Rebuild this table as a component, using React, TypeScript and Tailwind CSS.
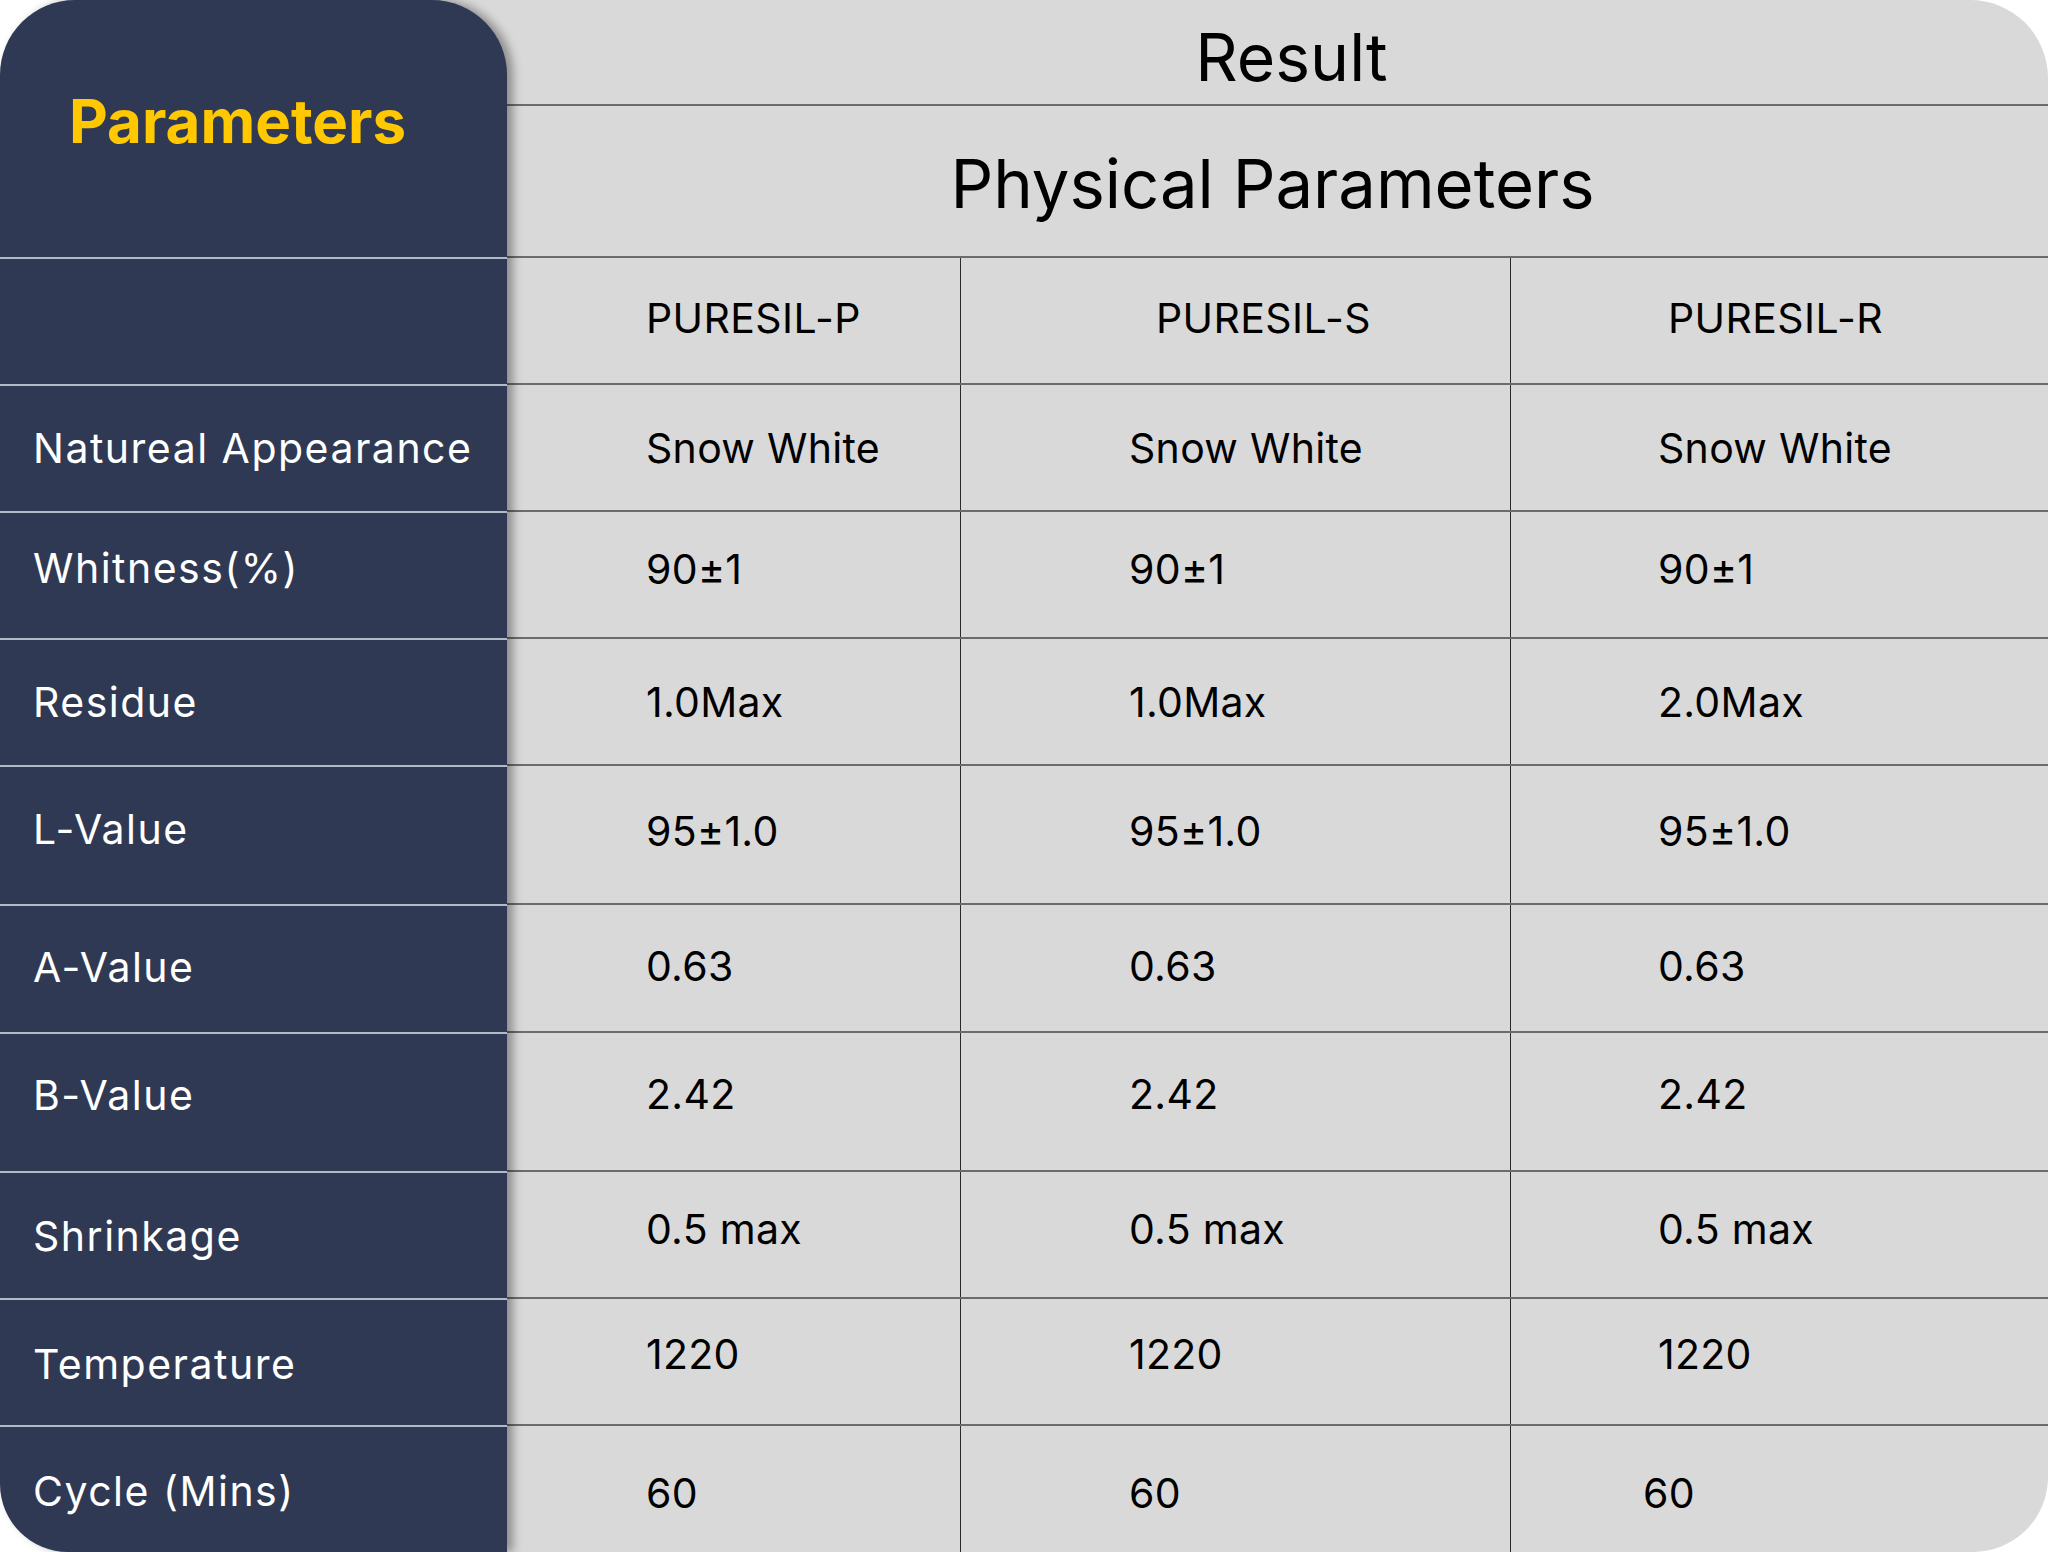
import React from "react";

type Row = { label: string; v: string[]; h: string; lo: string; vo: string; c3?: string };

const rows: Row[] = [
  { label: "Natureal Appearance", v: ["Snow White", "Snow White", "Snow White"], h: "h-[127px]", lo: "", vo: "pt-[2px]" },
  { label: "Whitness(%)", v: ["90±1", "90±1", "90±1"], h: "h-[127px]", lo: "pb-[14px]", vo: "pb-[10px]" },
  { label: "Residue", v: ["1.0Max", "1.0Max", "2.0Max"], h: "h-[127px]", lo: "", vo: "pt-[2px]" },
  { label: "L-Value", v: ["95±1.0", "95±1.0", "95±1.0"], h: "h-[139px]", lo: "pb-[12px]", vo: "pb-[6px]" },
  { label: "A-Value", v: ["0.63", "0.63", "0.63"], h: "h-[128px]", lo: "pb-[4px]", vo: "pb-[4px]" },
  { label: "B-Value", v: ["2.42", "2.42", "2.42"], h: "h-[139px]", lo: "pb-[14px]", vo: "pb-[14px]" },
  { label: "Shrinkage", v: ["0.5 max", "0.5 max", "0.5 max"], h: "h-[127px]", lo: "pt-[2px]", vo: "pb-[10px]" },
  { label: "Temperature", v: ["1220", "1220", "1220"], h: "h-[127px]", lo: "pt-[4px]", vo: "pb-[14px]" },
  { label: "Cycle (Mins)", v: ["60", "60", "60"], h: "h-[128px]", lo: "pt-[2px]", vo: "pt-[8px]", c3: "pl-[132px]" },
];

export default function App() {
  return (
    <div className="w-[2048px] h-[1552px] bg-white flex font-['Inter','Liberation_Sans',sans-serif] overflow-hidden">
      {/* Left panel */}
      <div className="relative z-10 w-[507px] shrink-0 bg-[#2f3954] rounded-tl-[75px] rounded-tr-[75px] rounded-bl-[68px] shadow-[6px_0_10px_rgba(0,0,0,0.35)] flex flex-col overflow-hidden">
        <div className="h-[257px] shrink-0 pl-[69px] pt-[91px]">
          <div className="text-[60px] leading-none font-bold text-[#ffc800]">Parameters</div>
        </div>
        <div className="h-[127px] shrink-0 border-t-2 border-[#b4b9c6]" />
        {rows.map((r, i) => (
          <div
            key={i}
            className={`${r.h} shrink-0 border-t-2 border-[#b4b9c6] flex items-center pl-[33px] ${r.lo}`}
          >
            <span className="text-[41px] leading-none tracking-[1.5px] text-white">{r.label}</span>
          </div>
        ))}
      </div>

      {/* Right panel */}
      <div className="-ml-[100px] pl-[100px] flex-1 bg-[#d9d9d9] rounded-tr-[78px] rounded-br-[75px] flex flex-col text-black">
        <div className="h-[104px] shrink-0 flex items-center justify-center pl-[28px] pt-[10px]">
          <span className="text-[66px] leading-none">Result</span>
        </div>
        <div className="h-[152px] shrink-0 border-t-2 border-[#6b6b6b] flex items-center justify-center pr-[10px] pt-[4px]">
          <span className="text-[67px] leading-none">Physical Parameters</span>
        </div>
        <div className="h-[127px] shrink-0 border-t-2 border-[#6b6b6b] flex">
          <div className="w-[453px] shrink-0 flex items-center pl-[139px] pb-[4px]">
            <span className="text-[41px] leading-none tracking-[0.4px]">PURESIL-P</span>
          </div>
          <div className="w-[550px] shrink-0 border-l border-[#2a2a2a] flex items-center pl-[195px] pb-[4px]">
            <span className="text-[41px] leading-none tracking-[0.4px]">PURESIL-S</span>
          </div>
          <div className="flex-1 border-l border-[#2a2a2a] flex items-center pl-[157px] pb-[4px]">
            <span className="text-[41px] leading-none tracking-[0.4px]">PURESIL-R</span>
          </div>
        </div>
        {rows.map((r, i) => (
          <div key={i} className={`${r.h} shrink-0 border-t-2 border-[#6b6b6b] flex`}>
            <div className={`w-[453px] shrink-0 flex items-center pl-[139px] ${r.vo}`}>
              <span className="text-[41px] leading-none tracking-[0.3px]">{r.v[0]}</span>
            </div>
            <div className={`w-[550px] shrink-0 border-l border-[#2a2a2a] flex items-center pl-[168px] ${r.vo}`}>
              <span className="text-[41px] leading-none tracking-[0.3px]">{r.v[1]}</span>
            </div>
            <div className={`flex-1 border-l border-[#2a2a2a] flex items-center ${r.c3 ?? "pl-[147px]"} ${r.vo}`}>
              <span className="text-[41px] leading-none tracking-[0.3px]">{r.v[2]}</span>
            </div>
          </div>
        ))}
      </div>
    </div>
  );
}
